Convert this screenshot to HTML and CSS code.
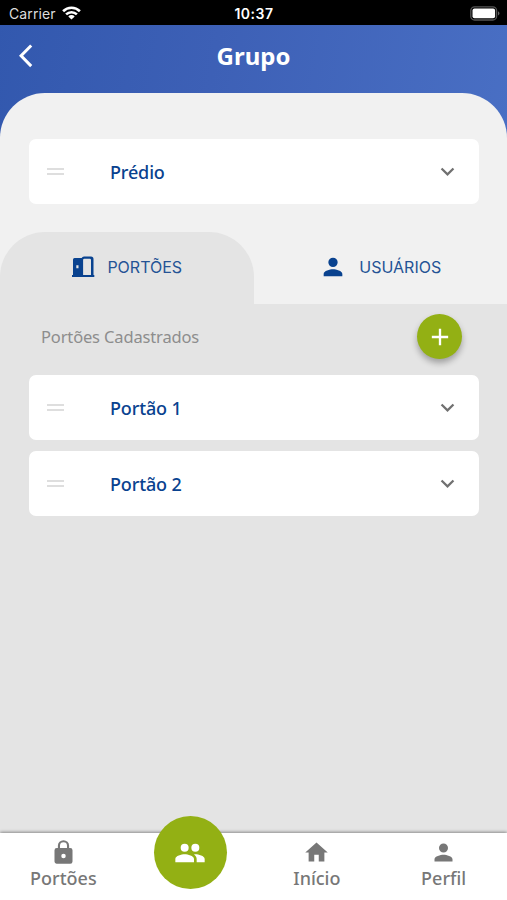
FILE: index.html
```
<!DOCTYPE html>
<html lang="pt-BR">
<head>
<meta charset="utf-8">
<meta name="viewport" content="width=device-width">
<title>Grupo</title>
<link rel="stylesheet" href="styles.css">
</head>
<body>
<div class="status">
  <div class="carrier"><span>Carrier</span>
    <svg width="19" height="14" viewBox="0 0 19 14" fill="none" stroke="#fff" stroke-width="2.6"><path d="M1.1 5.2a12 12 0 0 1 16.8 0M4.1 8.4a7.7 7.7 0 0 1 10.8 0"/><path d="M9.5 13.6L6.3 10.4a4.6 4.6 0 0 1 6.4 0z" fill="#fff" stroke="none"/></svg>
  </div>
  <time>10:37</time>
  <svg class="battery" width="31" height="15" viewBox="0 0 31 15"><rect x=".8" y=".8" width="25.8" height="13.2" rx="3.8" fill="none" stroke="#555" stroke-width="1.3"/><rect x="2.5" y="2.6" width="22.6" height="9.6" rx="2" fill="#fff"/><path d="M28 5.2q3 2.2 0 4.4z" fill="#666"/></svg>
</div>
<header class="header">
  <svg class="back" width="14" height="24" viewBox="0 0 14 24" fill="none" stroke="#fff" stroke-width="3"><path d="M12.2 1.5L2.1 11.8l10.1 10.3"/></svg>
  <h1>Grupo</h1>
</header>
<main class="sheet">
  <div class="card group">
    <i class="grip"></i><span>Prédio</span>
    <svg class="chevron" viewBox="0 0 24 24"><path d="M7.41 8.59L12 13.17l4.59-4.58L18 10l-6 6-6-6z"/></svg>
  </div>
  <nav class="tabs">
    <div class="tab active">
      <svg width="24" height="22" viewBox="0 0 24 22"><path fill="#09428f" fill-rule="evenodd" d="M1 19.3V19h1V3.5Q2 2 3.5 2h7.2Q11.2.5 13 .5h7q2.5 0 2.5 2.5v16h.8v2H1zM12.1 4v15H20V4q0-1.3-1.2-1.3h-5.5Q12.1 2.7 12.1 4zM5.3 9.2v3h2.2v-3z"/></svg>
      <span>PORTÕES</span>
    </div>
    <div class="tab">
      <svg width="28" height="28" viewBox="0 0 24 24" fill="#09428f"><path d="M12 12a4 4 0 1 0 0-8 4 4 0 0 0 0 8zm0 2c-2.67 0-8 1.34-8 4v2h16v-2c0-2.66-5.33-4-8-4z"/></svg>
      <span>USUÁRIOS</span>
    </div>
  </nav>
  <section class="panel">
    <div class="panel-head">
      <h2>Portões Cadastrados</h2>
      <button class="add" aria-label="Adicionar"><svg width="28" height="28" viewBox="0 0 24 24"><path fill="#fff" d="M19 13h-6v6h-2v-6H5v-2h6V5h2v6h6z"/></svg></button>
    </div>
    <div class="card"><i class="grip"></i><span>Portão 1</span>
      <svg class="chevron" viewBox="0 0 24 24"><path d="M7.41 8.59L12 13.17l4.59-4.58L18 10l-6 6-6-6z"/></svg></div>
    <div class="card"><i class="grip"></i><span>Portão 2</span>
      <svg class="chevron" viewBox="0 0 24 24"><path d="M7.41 8.59L12 13.17l4.59-4.58L18 10l-6 6-6-6z"/></svg></div>
  </section>
</main>
<footer class="bottom">
  <div class="item"><svg viewBox="0 0 24 24"><path d="M18 8h-1V6A5 5 0 0 0 7 6v2H6a2 2 0 0 0-2 2v10c0 1.1.9 2 2 2h12a2 2 0 0 0 2-2V10a2 2 0 0 0-2-2zm-6 9a2 2 0 1 1 0-4 2 2 0 0 1 0 4zm3.1-9H8.9V6a3.1 3.1 0 0 1 6.2 0z"/></svg><span>Portões</span></div>
  <div class="item"><div class="current"><svg viewBox="0 0 24 24"><path d="M16 11a3 3 0 1 0 0-6 3 3 0 0 0 0 6zm-8 0a3 3 0 1 0 0-6 3 3 0 0 0 0 6zm0 2c-2.33 0-7 1.17-7 3.5V19h14v-2.5C15 14.17 10.33 13 8 13zm8 0c-.29 0-.62.02-.97.05 1.16.84 1.97 1.97 1.97 3.45V19h6v-2.5c0-2.33-4.67-3.5-7-3.5z"/></svg></div></div>
  <div class="item"><svg viewBox="0 0 24 24"><path d="M10 20v-6h4v6h5v-8h3L12 3 2 12h3v8z"/></svg><span>Início</span></div>
  <div class="item"><svg viewBox="0 0 24 24"><path d="M12 12a4 4 0 1 0 0-8 4 4 0 0 0 0 8zm0 2c-2.67 0-8 1.34-8 4v2h16v-2c0-2.66-5.33-4-8-4z"/></svg><span>Perfil</span></div>
</footer>
</body>
</html>
```
FILE: styles.css
```
* { box-sizing: border-box; }
body {
  margin: 0;
  height: 900px;
  display: flex;
  flex-direction: column;
  overflow: hidden;
  font-family: "Noto Sans", sans-serif;
  background: linear-gradient(100deg, #3258ae 0, #3d60b6 42%, #496fc4 100%) 0 0 / 100% 160px no-repeat #e4e4e4;
}
svg { display: block; flex: none; }
.status {
  height: 25px;
  flex: none;
  background: #000;
  color: #fff;
  display: grid;
  grid-template-columns: 1fr auto 1fr;
  align-items: center;
  padding: 2px 6px 0 9px;
  font: 14px/20px Inter, sans-serif;
}
.carrier { display: flex; align-items: center; gap: 6px; color: #ddd; letter-spacing: .1px; }
.carrier svg { margin-top: -2px; }
.status time { font-weight: 600; letter-spacing: .5px; margin-right: 2px; }
.battery { justify-self: end; margin-top: -1px; }
.header {
  height: 68px;
  flex: none;
  display: grid;
  grid-template-columns: 1fr auto 1fr;
  align-items: center;
  padding: 0 19px 6px;
}
h1 { margin: 0; color: #fff; font: 700 24px/32px "Noto Sans", sans-serif; }
.sheet {
  flex: 1;
  display: flex;
  flex-direction: column;
  background: #f1f1f1;
  border-radius: 45px 45px 0 0;
  padding-top: 46px;
}
.card {
  height: 65px;
  flex: none;
  margin: 0 28px 11px 29px;
  padding: 0 18px;
  border-radius: 7px;
  background: #fff;
  display: flex;
  align-items: center;
  color: #09428f;
  font-size: 18px;
  font-weight: 500;
  letter-spacing: -.15px;
}
.card.group { margin-bottom: 28px; }
.grip {
  width: 17px;
  height: 7px;
  border: solid #dedede;
  border-width: 2px 0;
  margin-right: 46px;
}
.chevron { width: 27px; height: 27px; fill: #707070; margin-left: auto; }
.tabs { display: grid; grid-template-columns: 1fr 1fr; height: 72px; flex: none; }
.tab {
  display: flex;
  justify-content: center;
  align-items: center;
  gap: 12px;
  padding-bottom: 3px;
  color: #245395;
  font: 400 16px/24px Inter, sans-serif;
}
.tab.active { background: #e4e4e4; border-radius: 45px 45px 0 0; }
.panel { flex: 1; background: #e4e4e4; }
.panel-head {
  height: 71px;
  padding: 10px 45px 16px 41px;
  display: flex;
  align-items: center;
  justify-content: space-between;
}
h2 { margin: 0; color: #8d8d8d; font: 400 16.5px/24px "Noto Sans", sans-serif; letter-spacing: -.15px; }
.add {
  width: 45px;
  height: 45px;
  padding: 0;
  border: 0;
  border-radius: 50%;
  background: #93b014;
  box-shadow: 0 4px 6px rgba(0,0,0,.3);
  display: grid;
  place-items: center;
}
.bottom {
  height: 67px;
  flex: none;
  background: #fff;
  box-shadow: 0 -1px 3px rgba(0,0,0,.4);
  display: grid;
  grid-template-columns: repeat(4, 1fr);
}
.item {
  display: flex;
  flex-direction: column;
  align-items: center;
  padding-top: 6px;
  color: #777;
  font: 500 18px/24px "Noto Sans", sans-serif;
}
.item svg { width: 27px; height: 27px; fill: #777; }
.current {
  width: 73px;
  height: 73px;
  flex: none;
  margin-top: -23px;
  border-radius: 50%;
  background: #93b014;
  display: grid;
  place-items: center;
}
.item .current svg { width: 32px; height: 32px; fill: #fff; }
```
